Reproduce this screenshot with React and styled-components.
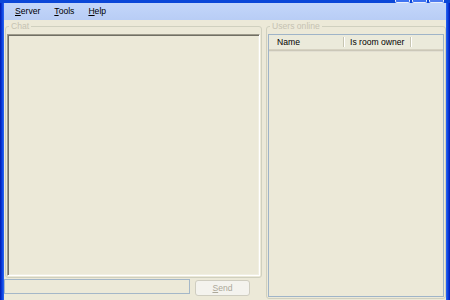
import React from "react";
import styled, { createGlobalStyle } from "styled-components";

const GlobalStyle = createGlobalStyle`
  html, body {
    margin: 0;
    padding: 0;
    overflow: hidden;
  }
  body {
    font-family: "Liberation Sans", Arial, sans-serif;
    font-size: 8.6px;
  }
`;

const Window = styled.div`
  width: 450px;
  height: 300px;
  display: flex;
  flex-direction: column;
  overflow: hidden;
  color: #000;
`;

const TitleStrip = styled.div`
  height: 3px;
  display: flex;
  justify-content: flex-end;
  gap: 2px;
  padding-right: 6px;
  background: #0b47d8;
`;

const CaptionButton = styled.div`
  width: 13px;
  height: 2px;
  border: 1px solid #e8eefc;
  border-top: none;
  border-radius: 0 0 2px 2px;
  background: ${(p) => (p.$close ? "#4f7cf0" : "#3e73f2")};
`;

const Frame = styled.div`
  flex: 1;
  min-height: 0;
  display: flex;
  padding: 0 4px;
  background: linear-gradient(
    90deg,
    #0019b0 0,
    #0a3fde 2px,
    #2a66f2 4px,
    transparent 4px,
    transparent calc(100% - 4px),
    #2a66f2 calc(100% - 4px),
    #0a3fde calc(100% - 2px),
    #0019b0 100%
  );
`;

const Client = styled.div`
  flex: 1;
  display: flex;
  flex-direction: column;
  background: #ece9d8;
  min-width: 0;
`;

const MenuBar = styled.div`
  height: 17px;
  display: flex;
  align-items: center;
  padding-left: 4px;
  background: linear-gradient(#c3d6fa, #b8cdf5);
`;

const MenuItem = styled.div`
  padding: 0 7px;
  line-height: 17px;
  u {
    text-decoration: underline;
  }
`;

const Content = styled.div`
  flex: 1;
  min-height: 0;
  display: grid;
  grid-template-columns: 257px 180px;
  grid-template-rows: 1fr auto;
  column-gap: 4px;
  padding: 1px 1px 1px 1px;
`;

const Group = styled.fieldset`
  margin: 0;
  padding: ${(p) => p.$pad};
  border: 1px solid #d0d0bf;
  border-radius: 3px;
  min-width: 0;
  min-height: 0;
  display: flex;
  flex-direction: column;
  grid-row: ${(p) => p.$rows};
`;

const Legend = styled.legend`
  margin-left: 2px;
  padding: 0 2px;
  line-height: 10px;
  color: #c5c2b2;
`;

const ChatArea = styled.div`
  flex: 1;
  border-style: solid;
  border-width: 1px;
  border-color: #9d9a8b #ffffff #ffffff #9d9a8b;
  box-shadow: inset 1px 1px 0 #716f64, inset -1px -1px 0 #f1efe2;
  background: #ece9d8;
`;

const InputRow = styled.div`
  display: flex;
  align-items: flex-start;
  margin: 1px 0 3px -1px;
`;

const MessageInput = styled.div`
  width: 184px;
  height: 13px;
  border: 1px solid #a4b7c8;
  background: #ece9d8;
`;

const SendButton = styled.div`
  width: 53px;
  height: 14px;
  margin: 1px 0 0 5px;
  border: 1px solid #cfcdc0;
  border-radius: 3px;
  background: #f4f3ee;
  color: #aca899;
  display: flex;
  align-items: center;
  justify-content: center;
  u {
    text-decoration: underline;
  }
`;

const ListView = styled.div`
  flex: 1;
  border: 1px solid #9fb4c8;
  background: #ece9d8;
  display: flex;
  flex-direction: column;
`;

const ListHeader = styled.div`
  height: 14px;
  display: flex;
  align-items: center;
  background: #ebeadb;
  border-bottom: 1px solid #d6d2c2;
  box-shadow: 0 1px 0 #cbc7b8, 0 2px 0 #e2dfd2;
`;

const HeaderCell = styled.div`
  width: ${(p) => p.$width}px;
  padding-left: ${(p) => p.$pad}px;
  box-sizing: border-box;
  white-space: nowrap;
`;

const Separator = styled.div`
  width: 1px;
  height: 10px;
  background: #c7c5b2;
  box-shadow: 1px 0 0 #fff;
`;

export default function App() {
  return (
    <>
      <GlobalStyle />
      <Window>
        <TitleStrip>
          <CaptionButton />
          <CaptionButton />
          <CaptionButton $close />
        </TitleStrip>
        <Frame>
          <Client>
            <MenuBar>
              <MenuItem>
                <u>S</u>erver
              </MenuItem>
              <MenuItem>
                <u>T</u>ools
              </MenuItem>
              <MenuItem>
                <u>H</u>elp
              </MenuItem>
            </MenuBar>
            <Content>
              <Group $pad="3px 1px 1px 1px" $rows="1">
                <Legend>Chat</Legend>
                <ChatArea />
              </Group>
              <Group $pad="3px 1px 1px 1px" $rows="1 / span 2">
                <Legend>Users online</Legend>
                <ListView>
                  <ListHeader>
                    <HeaderCell $width={74} $pad={8}>
                      Name
                    </HeaderCell>
                    <Separator />
                    <HeaderCell $width={66} $pad={6}>
                      Is room owner
                    </HeaderCell>
                    <Separator />
                  </ListHeader>
                </ListView>
              </Group>
              <InputRow>
                <MessageInput />
                <SendButton>
                  <span>
                    <u>S</u>end
                  </span>
                </SendButton>
              </InputRow>
            </Content>
          </Client>
        </Frame>
      </Window>
    </>
  );
}
